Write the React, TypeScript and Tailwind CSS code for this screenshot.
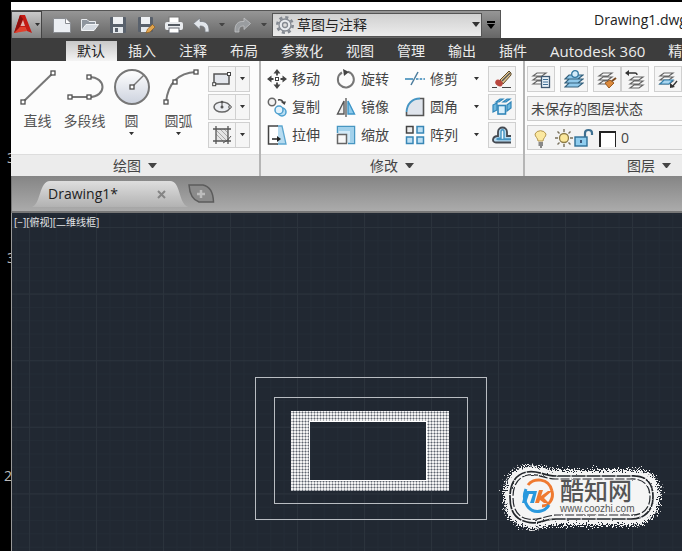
import type { ReactNode } from "react";

const uiFont = "font-['Open_Sans','Noto_Sans_CJK_SC',sans-serif]";

function Caret({ className = "" }: { className?: string }) {
  return (
    <svg viewBox="0 0 8 5" className={`shrink-0 ${className}`} aria-hidden="true">
      <path d="M0 0H8L4 5Z" fill="currentColor" />
    </svg>
  );
}

function Icon({ size = 20, children }: { size?: number; children: ReactNode }) {
  return (
    <svg width={size} height={size} viewBox={`0 0 ${size} ${size}`} fill="none" className="shrink-0" aria-hidden="true">
      {children}
    </svg>
  );
}

/* ---------- quick access toolbar ---------- */

const quickIcons: { label: string; icon: ReactNode }[] = [
  {
    label: "新建",
    icon: (
      <Icon>
        <path d="M1.500 3.500H14L18.500 8V17.500H1.500Z" fill="#eceff3" stroke="#8a8d92" />
        <path d="M13.500 3.500V8.500H18.500" fill="#fff" stroke="#8a8d92" />
      </Icon>
    ),
  },
  {
    label: "打开",
    icon: (
      <Icon>
        <path d="M1.500 15V4.500H7L9 6.500H15.500V9" fill="#8e959e" stroke="#e8ebef" />
        <path d="M1.500 15.500L6 9.500H18.500L14 15.500Z" fill="#d5dae1" stroke="#f1f3f5" />
      </Icon>
    ),
  },
  {
    label: "保存",
    icon: (
      <Icon>
        <rect x="2" y="2" width="16" height="16" rx="1" fill="#59616c" />
        <rect x="5" y="2" width="10" height="7" fill="#eef0f3" />
        <rect x="5" y="12" width="10" height="6" fill="#e4e8ec" />
        <rect x="7" y="13" width="3" height="4" fill="#59616c" />
      </Icon>
    ),
  },
  {
    label: "另存为",
    icon: (
      <Icon>
        <rect x="2" y="2" width="15" height="15" rx="1" fill="#59616c" />
        <rect x="5" y="2" width="9" height="7" fill="#eef0f3" />
        <rect x="5" y="12" width="9" height="5" fill="#e4e8ec" />
        <path d="M10 18L11.500 14L16.500 9.500L19 12L14 17Z" fill="#e2a44c" stroke="#8b5c1f" strokeWidth=".7" />
      </Icon>
    ),
  },
  {
    label: "打印",
    icon: (
      <Icon>
        <rect x="5" y="2" width="10" height="6" fill="#fff" stroke="#777" />
        <rect x="1" y="7" width="18" height="8" rx="2" fill="#e9ebee" />
        <rect x="4" y="9" width="12" height="2" fill="#555b63" />
        <rect x="5" y="13" width="10" height="5" fill="#fff" stroke="#666b73" />
      </Icon>
    ),
  },
  {
    label: "放弃",
    icon: (
      <Icon>
        <path d="M1.500 8.500L8 3V6.500C14 6 17.500 9 17 17H13C13.500 12.500 12 11 8 11V14.500Z" fill="#e1e5ea" stroke="#787d84" strokeWidth=".8" />
      </Icon>
    ),
  },
];

function QuickBar() {
  return (
    <header className="mt-[2px] flex h-9 bg-white">
      <div className="mt-2 flex h-7 shrink-0 items-center border-t border-r border-[#555] bg-linear-to-b from-[#969696] to-[#666]">
        <button
          aria-label="应用程序菜单"
          className="flex h-7 w-[31px] items-center justify-center gap-[2px] border border-[#444] bg-linear-to-b from-[#c9c9c9] to-[#858585] text-[#333]"
        >
          <svg width="20" height="22" viewBox="0 0 20 22" aria-hidden="true">
            <path d="M7 1H12L19 19L14 17L12 13H7L5 18L1 19Z" fill="#c51b14" />
            <path d="M7 1L1 19L5 17L10 5Z" fill="#8f100d" />
            <path d="M10 6L7.500 12H12Z" fill="#e0b5af" />
            <path d="M1 19L7 13H12L14 17Z" fill="#e0402d" />
          </svg>
          <Caret className="w-[5px]" />
        </button>
        <div className="flex items-center pl-[6px]">
          {quickIcons.map((q) => (
            <button key={q.label} aria-label={q.label} className="flex w-7 justify-center">
              {q.icon}
            </button>
          ))}
          <button aria-label="放弃列表" className="flex w-3 justify-center text-[#444]">
            <Caret className="w-[6px]" />
          </button>
          <button aria-label="重做" className="flex w-7 justify-center">
            <Icon>
              <path d="M18.500 8.500L12 3V6.500C6 6 2.500 9 3 17H7C6.500 12.500 8 11 12 11V14.500Z" fill="#999c9f" stroke="#c1c3c5" strokeWidth=".8" />
            </Icon>
          </button>
          <button aria-label="重做列表" className="flex w-4 justify-center text-[#444]">
            <Caret className="w-[6px]" />
          </button>
        </div>
        <div className="grid h-6 w-[210px] items-center border border-[#555] bg-linear-to-b from-[#d0d0d0] to-[#ececec]">
          <select
            aria-label="工作空间"
            className="col-start-1 row-start-1 h-full w-full appearance-none bg-transparent pl-6 text-sm text-[#222] outline-none"
          >
            <option>草图与注释</option>
          </select>
          <div className="pointer-events-none col-start-1 row-start-1 flex items-center justify-between pr-[1px] pl-[2px] text-[#333]">
            <Icon>
              <circle cx="10" cy="10" r="7.700" stroke="#858a92" strokeWidth="2.600" strokeDasharray="3.100 2.950" />
              <circle cx="10" cy="10" r="6" fill="#e8ebef" stroke="#858a92" strokeWidth="1.300" />
              <circle cx="10" cy="10" r="2.500" fill="#ddd" stroke="#858a92" strokeWidth="1.300" />
            </Icon>
            <Caret className="w-2" />
          </div>
        </div>
        <button aria-label="自定义快速访问工具栏" className="flex w-[18px] flex-col items-center gap-[1px] text-black">
          <span className="h-[2px] w-2 bg-black" />
          <Caret className="w-2" />
        </button>
      </div>
      <h1 className="ml-[93px] flex items-center text-sm font-normal whitespace-nowrap text-[#222]">Drawing1.dwg</h1>
    </header>
  );
}

/* ---------- ribbon ---------- */

const ribbonTabs = ["默认", "插入", "注释", "布局", "参数化", "视图", "管理", "输出", "插件", "Autodesk 360", "精选应用"];

function RibbonTabs() {
  return (
    <nav className="flex h-[23px] items-end bg-[#3d3d3d] pl-[55px]">
      {ribbonTabs.map((tab, i) => (
        <button
          key={tab}
          className={`h-5 shrink-0 pr-3 pl-[11px] leading-5 whitespace-nowrap ${
            i === 0 ? "bg-linear-to-b from-[#c8c8c8] to-[#f4f4f4] text-[#222]" : "text-[#ececec]"
          } ${/^[A-Z]/.test(tab) ? "text-[15px]" : "text-sm"}`}
        >
          {tab}
        </button>
      ))}
    </nav>
  );
}

function Panel({ title, className, bodyClass, children }: { title: string; className: string; bodyClass: string; children: ReactNode }) {
  return (
    <section className={`flex shrink-0 flex-col border-r-2 border-[#b5b5b5] bg-[#fcfcfc] ${className}`}>
      <div className={`flex h-[93px] pt-[5px] ${bodyClass}`}>{children}</div>
      <button className="flex h-[22px] items-center justify-center gap-[7px] border-t border-[#ddd] bg-[#ececec] text-sm leading-5 text-[#444]">
        {title}
        <Caret className="w-[9px]" />
      </button>
    </section>
  );
}

function Node({ x, y }: { x: number; y: number }) {
  return <rect x={x - 2} y={y - 2} width="4" height="4" fill="#fff" stroke="#505050" strokeWidth="1.300" />;
}

const drawTools: { label: string; menu: boolean; icon: ReactNode }[] = [
  {
    label: "直线",
    menu: false,
    icon: (
      <Icon size={40}>
        <path d="M5 35L35 6" stroke="#777" strokeWidth="2" />
        <Node x={5} y={35} />
        <Node x={35} y={6} />
      </Icon>
    ),
  },
  {
    label: "多段线",
    menu: false,
    icon: (
      <Icon size={40}>
        <path d="M5 30H24C42 30 42 10 24 10" stroke="#777" strokeWidth="2" />
        <Node x={5} y={30} />
        <Node x={24} y={30} />
        <Node x={24} y={10} />
      </Icon>
    ),
  },
  {
    label: "圆",
    menu: true,
    icon: (
      <Icon size={40}>
        <defs>
          <linearGradient id="disc" x1="0" y1="0" x2="0" y2="1">
            <stop offset="0" stopColor="#fff" />
            <stop offset="1" stopColor="#ccd2de" />
          </linearGradient>
        </defs>
        <circle cx="20" cy="20" r="17" fill="url(#disc)" stroke="#777" strokeWidth="2" />
        <path d="M20 20L32 8" stroke="#777" strokeWidth="1.500" />
        <Node x={20} y={20} />
      </Icon>
    ),
  },
  {
    label: "圆弧",
    menu: true,
    icon: (
      <Icon size={40}>
        <path d="M7 35C9 17 19 6 37 5" stroke="#777" strokeWidth="2" />
        <Node x={7} y={35} />
        <Node x={16} y={15} />
        <Node x={37} y={5} />
      </Icon>
    ),
  },
];

const shapeTools: { label: string; icon: ReactNode }[] = [
  {
    label: "矩形",
    icon: (
      <Icon>
        <rect x="2" y="5" width="15" height="10" fill="#e3e6ec" stroke="#555" strokeWidth="1.500" />
        <rect x=".7" y="13.700" width="3" height="3" fill="#fff" stroke="#444" />
        <rect x="15.500" y="3.500" width="3" height="3" fill="#fff" stroke="#444" />
      </Icon>
    ),
  },
  {
    label: "椭圆",
    icon: (
      <Icon>
        <ellipse cx="10" cy="10" rx="8" ry="5" fill="#eceef2" stroke="#666" strokeWidth="1.500" />
        <path d="M10 5V10" stroke="#555" />
        <circle cx="10" cy="10" r="1.500" fill="#555" />
        <circle cx="10" cy="5" r="1.300" fill="#555" />
        <circle cx="18" cy="10" r="1.300" fill="#fff" stroke="#555" />
      </Icon>
    ),
  },
  {
    label: "图案填充",
    icon: (
      <Icon>
        <rect x="4" y="4" width="12" height="12" fill="#e4e4e4" />
        <path d="M4 9L11 16M4 5L15 16M8 4L16 12M12 4L16 8" stroke="#999" strokeWidth=".8" />
        <path d="M1 4H19M1 16H19M4 1V19M16 1V19" stroke="#555" strokeWidth="1.300" />
        <path d="M11 18Q16 16 19 11" stroke="#555" />
      </Icon>
    ),
  },
];

function DrawPanel() {
  return (
    <Panel title="绘图" className="w-[250px]" bodyClass="pl-[3px]">
      {drawTools.map((t) => (
        <button key={t.label} className="flex w-[47px] flex-col items-center pt-[1px] text-sm leading-5 whitespace-nowrap text-[#555]">
          {t.icon}
          <span className="mt-1">{t.label}</span>
          {t.menu && <Caret className="mt-[1px] w-[5px] text-[#333]" />}
        </button>
      ))}
      <div className="ml-[6px] flex flex-col gap-[2px]">
        {shapeTools.map((t) => (
          <div key={t.label} className="flex h-[26px] w-[42px] border border-[#d0d0d0] bg-[#f5f5f5]">
            <button aria-label={t.label} className="flex w-[27px] items-center justify-center border-r border-[#d0d0d0]">
              {t.icon}
            </button>
            <button aria-label={`${t.label}选项`} className="flex flex-1 items-center justify-center text-[#333]">
              <Caret className="w-[5px]" />
            </button>
          </div>
        ))}
      </div>
    </Panel>
  );
}

type Tool = { label: string; icon: ReactNode };

const modifyColumns: Tool[][] = [
  [
    {
      label: "移动",
      icon: (
        <Icon>
          <path d="M10 2V6.500M10 13.500V18M2 10H6.500M13.500 10H18" stroke="#444" strokeWidth="1.800" />
          <path d="M10 0L13.500 4.500H6.500ZM10 20L13.500 15.500H6.500ZM0 10L4.500 6.500V13.500ZM20 10L15.500 6.500V13.500Z" fill="#444" />
          <rect x="8.500" y="8.500" width="3" height="3" fill="#fff" stroke="#444" />
        </Icon>
      ),
    },
    {
      label: "复制",
      icon: (
        <Icon>
          <circle cx="5" cy="5" r="3.700" fill="#f3f3f3" stroke="#666" strokeWidth="1.500" />
          <circle cx="15" cy="15" r="4" fill="#b9def3" stroke="#4c9fce" strokeWidth="1.500" />
          <circle cx="12" cy="13" r="4" fill="#e3f3fc" stroke="#4c9fce" strokeWidth="1.500" />
          <path d="M11 3Q15 2 16 5" stroke="#444" strokeWidth="1.300" />
          <path d="M13.500 4.500H19L17.500 8Z" fill="#444" />
        </Icon>
      ),
    },
    {
      label: "拉伸",
      icon: (
        <Icon>
          <path d="M10 1H15L19 19H10" fill="#b6dbf0" stroke="#5ca6cf" strokeWidth="1.300" />
          <path d="M11 1H1.500V19H11" fill="#fff" stroke="#444" strokeWidth="1.500" />
          <path d="M5 14H11" stroke="#222" strokeWidth="1.500" />
          <path d="M10 11L14 14L10 17Z" fill="#222" />
        </Icon>
      ),
    },
  ],
  [
    {
      label: "旋转",
      icon: (
        <Icon>
          <path d="M6 3.500A8 8 0 1 0 12 2.800" stroke="#777" strokeWidth="2" />
          <path d="M7 0L13 3L8 7Z" fill="#444" />
        </Icon>
      ),
    },
    {
      label: "镜像",
      icon: (
        <Icon>
          <path d="M8 4V17H1.500Z" fill="#f0f0f0" stroke="#555" strokeWidth="1.400" />
          <path d="M12 4V17H18.500Z" fill="#8ecaeb" stroke="#3d95c7" strokeWidth="1.400" />
          <path d="M10 1V20" stroke="#444" strokeWidth="1.200" />
        </Icon>
      ),
    },
    {
      label: "缩放",
      icon: (
        <Icon>
          <path d="M1.500 8V1.500H18.500V18.500H12" fill="#d3eaf7" stroke="#4796c1" strokeWidth="1.500" />
          <path d="M2 2H18V6H2ZM14 5H18V18H14Z" fill="#a2d1eb" />
          <rect x="1.500" y="9.500" width="9" height="9" fill="#f7f7f7" stroke="#666" strokeWidth="1.500" />
        </Icon>
      ),
    },
  ],
  [
    {
      label: "修剪",
      icon: (
        <Icon>
          <path d="M0 10H8" stroke="#3384b5" strokeWidth="1.500" />
          <path d="M11 10H20" stroke="#3384b5" strokeWidth="1.300" strokeDasharray="2.500 1.200" />
          <path d="M6 16L13 3" stroke="#4a7b9c" strokeWidth="1.500" />
        </Icon>
      ),
    },
    {
      label: "圆角",
      icon: (
        <Icon>
          <path d="M1.500 18.500V15C2 7 7 1.500 15 1.500H18.500V18.500Z" fill="#dfe4ec" />
          <path d="M15 1.500H18.500V18.500H1.500V15" stroke="#555" strokeWidth="1.600" />
          <path d="M1.500 15C2 7 7 1.500 15 1.500" stroke="#4595c3" strokeWidth="1.800" />
        </Icon>
      ),
    },
    {
      label: "阵列",
      icon: (
        <Icon>
          <rect x="1.500" y="1.500" width="6.500" height="6.500" fill="#eee" stroke="#444" strokeWidth="1.500" />
          <path d="M12 1.500H18.500V8H12ZM1.500 12H8V18.500H1.500ZM12 12H18.500V18.500H12Z" fill="#bfe0f4" stroke="#3987b6" strokeWidth="1.500" />
        </Icon>
      ),
    },
  ],
];

const modifyExtras: Tool[] = [
  {
    label: "删除",
    icon: (
      <Icon>
        <path d="M8 11L17 2L19 4V6L11 15Z" fill="#e3c68f" stroke="#5d4a2a" />
        <path d="M10 12L18 4" stroke="#555" strokeWidth="1.500" />
        <ellipse cx="7" cy="14" rx="4" ry="3" fill="#b9473e" transform="rotate(35 7 14)" />
        <path d="M0 18.500H5M10 18.500H19" stroke="#444" />
      </Icon>
    ),
  },
  {
    label: "分解",
    icon: (
      <Icon>
        <path d="M1 8L5 6V13L1 15ZM15 8L19 5V11L15 14ZM4 5L8 2H11L7 5ZM11 5L15 2H18L14 5Z" fill="#6fb8de" stroke="#3186b9" strokeWidth="1.200" />
        <rect x="6" y="8.500" width="7.500" height="8.500" fill="#d9effb" stroke="#3186b9" strokeWidth="1.600" />
      </Icon>
    ),
  },
  {
    label: "偏移",
    icon: (
      <Icon>
        <path d="M19 17.500H4C-.5 17.500 0 11 6 11V7C6 1 15 1 15 7V11H19" fill="#b8dbf1" stroke="#454a52" strokeWidth="1.800" />
        <path d="M19 14.500H6C4 14.500 5 13 9 13V7C9 4 12 4 12 7V14H19" fill="#eef6fb" stroke="#4595c3" strokeWidth="1.400" />
      </Icon>
    ),
  },
];

function BoxedTool({ tool, className = "" }: { tool: Tool; className?: string }) {
  return (
    <button
      aria-label={tool.label}
      className={`flex h-[26px] w-7 shrink-0 items-center justify-center border border-[#d0d0d0] bg-[#f5f5f5] ${className}`}
    >
      {tool.icon}
    </button>
  );
}

function ModifyPanel() {
  return (
    <Panel title="修改" className="w-[264px]" bodyClass="pl-[6px]">
      {modifyColumns.map((column, c) => (
        <div key={c} className="flex w-[69px] shrink-0 flex-col gap-[2px]">
          {column.map((t) => (
            <div key={t.label} className="flex h-[26px] items-center">
              <button className="flex items-center gap-[5px] text-sm leading-5 whitespace-nowrap text-[#444]">
                {t.icon}
                {t.label}
              </button>
            </div>
          ))}
        </div>
      ))}
      <div className="flex w-[14px] shrink-0 flex-col gap-[2px] text-[#333]">
        {modifyColumns[2].map((t) => (
          <button key={t.label} aria-label={`${t.label}选项`} className="flex h-[26px] w-[9px] items-center justify-start">
            <Caret className="w-[5px]" />
          </button>
        ))}
      </div>
      <div className="flex flex-col gap-[2px]">
        {modifyExtras.map((t) => (
          <BoxedTool key={t.label} tool={t} />
        ))}
      </div>
    </Panel>
  );
}

function Sheets({ blue = false }: { blue?: boolean }) {
  return (
    <path
      d="M2 15L6 12H15L11 15ZM2 11L6 8H15L11 11ZM2 7L6 4H15L11 7Z"
      fill={blue ? "#a9d6f0" : "#fafafa"}
      stroke={blue ? "#34779f" : "#666"}
      strokeWidth="1.200"
    />
  );
}

const layerTools: Tool[] = [
  {
    label: "图层特性",
    icon: (
      <Icon>
        <Sheets />
        <rect x="10.500" y="7.500" width="8" height="11" fill="#e9f2fa" stroke="#3f5870" strokeWidth="1.300" />
        <path d="M12 10.500H17M12 13H17M12 15.500H17" stroke="#3f6f96" />
      </Icon>
    ),
  },
  {
    label: "置为当前",
    icon: (
      <Icon>
        <path d="M1 18L5 14H19L14 18ZM1 14L5 10H19L14 14ZM1 10L5 6H19L14 10Z" fill="#8fc8ea" stroke="#34607c" strokeWidth="1.200" />
        <circle cx="11" cy="5" r="3.300" fill="#d4ecfa" stroke="#34779f" strokeWidth="1.300" />
      </Icon>
    ),
  },
  {
    label: "匹配图层",
    icon: (
      <Icon>
        <Sheets />
        <path d="M8 14L13 11L17 14L12 19Z" fill="#dc8a3c" stroke="#9b5a20" />
        <path d="M15 12L19 9" stroke="#7b4a20" strokeWidth="2" />
      </Icon>
    ),
  },
  {
    label: "上一个",
    icon: (
      <Icon>
        <g transform="translate(3 4)">
          <Sheets />
        </g>
        <path d="M3 4H10Q12 4 12 6" stroke="#333" strokeWidth="1.300" />
        <path d="M0 4L4 1V7Z" fill="#333" />
      </Icon>
    ),
  },
  {
    label: "更改为当前图层",
    icon: (
      <Icon>
        <Sheets />
        <path d="M2 15L6 11H15L11 15Z" fill="#a9d6f0" stroke="#3480ad" strokeWidth="1.200" />
        <path d="M19 12L14 18" stroke="#333" strokeWidth="1.300" />
        <path d="M12 19V14L17 18Z" fill="#333" />
      </Icon>
    ),
  },
];

function LayerPanel() {
  return (
    <Panel title="图层" className="w-[250px]" bodyClass="pl-[2px]">
      <div className="flex min-w-0 flex-1 flex-col gap-1">
        <div className="flex">
          {layerTools.map((t, i) => (
            <BoxedTool key={t.label} tool={t} className={i === 2 ? "" : "mr-[5px]"} />
          ))}
        </div>
        <select
          aria-label="图层状态"
          className="h-[25px] w-full shrink-0 appearance-none border border-[#ccc] bg-[#f3f3f3] pl-[3px] text-sm text-[#444] outline-none"
        >
          <option>未保存的图层状态</option>
        </select>
        <button aria-label="当前图层 0" className="flex h-[25px] shrink-0 items-center border border-[#ccc] bg-[#f3f3f3] pl-[3px] text-sm text-[#444]">
          <Icon>
            <path d="M7 13C7 10 4 9 4 6A6 5.500 0 0 1 15 6C15 9 12 10 12 13Z" fill="#fbe8a0" stroke="#b4964e" />
            <path d="M7.500 15H12M7.500 17H12M9 19H11" stroke="#666" strokeWidth="1.300" />
          </Icon>
          <span className="ml-[3px]">
            <Icon>
              <circle cx="10" cy="10" r="4.500" fill="#fbe79a" stroke="#8e7c46" strokeWidth="1.300" />
              <path d="M10 1V4M10 16V19M1 10H4M16 10H19M3.500 3.500L5.500 5.500M14.500 14.500L16.500 16.500M3.500 16.500L5.500 14.500M14.500 5.500L16.500 3.500" stroke="#77705c" strokeWidth="1.400" />
            </Icon>
          </span>
          <Icon>
            <rect x="1" y="9" width="12" height="9" fill="#8fcdef" stroke="#2d6e96" strokeWidth="1.400" />
            <path d="M11 9V5C11 1 18 1 18 5V7" stroke="#3d6f90" strokeWidth="2.200" />
            <path d="M7 12V15" stroke="#235" strokeWidth="1.500" />
          </Icon>
          <span className="mt-[3px] ml-[5px] h-4 w-[17px] border-t-2 border-r border-l-2 border-[#222] bg-white" />
          <span className="ml-[5px]">0</span>
        </button>
      </div>
    </Panel>
  );
}

/* ---------- document tabs ---------- */

function DocumentTabs() {
  return (
    <div className="flex h-[37px] items-start border-b-2 border-l border-[#777] bg-linear-to-b from-[#858585] to-[#ababab] pt-[5px] pl-5">
      <div className="grid h-[26px] w-[156px] shrink-0">
        <svg viewBox="0 0 156 26" className="col-start-1 row-start-1 h-[26px] w-[156px]" aria-hidden="true">
          <defs>
            <linearGradient id="doc-tab" x1="0" y1="0" x2="0" y2="1">
              <stop offset="0" stopColor="#dedede" />
              <stop offset="1" stopColor="#b2b2b2" />
            </linearGradient>
          </defs>
          <path d="M0 26C9 23 7 0 18 0H138C149 0 146 22 156 26Z" fill="url(#doc-tab)" />
        </svg>
        <div className="col-start-1 row-start-1 flex items-center justify-between pr-[22px] pl-4">
          <button className="text-sm leading-5 text-[#222]">Drawing1*</button>
          <button aria-label="关闭 Drawing1">
            <svg width="9" height="9" viewBox="0 0 9 9" aria-hidden="true">
              <path d="M1 1L8 8M8 1L1 8" stroke="#858585" strokeWidth="2" />
            </svg>
          </button>
        </div>
      </div>
      <button aria-label="新建图形" className="mt-[3px]">
        <svg width="27" height="20" viewBox="0 0 27 20" aria-hidden="true">
          <path d="M1 1H15Q25 3 25.500 18H11Q2 15 1 1Z" fill="#8b8b8b" stroke="#5c5c5c" strokeWidth="1.500" />
          <path d="M13 6V14M9 10H17" stroke="#bcbcbc" strokeWidth="2.500" />
        </svg>
      </button>
    </div>
  );
}

/* ---------- model space ---------- */

function Watermark() {
  return (
    <svg width="182" height="84" viewBox="0 0 182 84" className="absolute top-[241px] left-[479px]" role="img" aria-label="酷知网 www.coozhi.com">
      <defs>
        <filter id="spray" x="-10%" y="-20%" width="120%" height="140%">
          <feTurbulence type="fractalNoise" baseFrequency=".8" numOctaves="2" seed="4" />
          <feDisplacementMap in="SourceGraphic" scale="16" xChannelSelector="R" yChannelSelector="G" />
          <feGaussianBlur stdDeviation=".6" />
        </filter>
        <filter id="rough">
          <feTurbulence type="fractalNoise" baseFrequency=".25" numOctaves="2" seed="9" />
          <feDisplacementMap in="SourceGraphic" scale="2" xChannelSelector="R" yChannelSelector="G" />
        </filter>
      </defs>
      <path
        d="M36 12C48 10 53 16 65 16H140C164 14 169 28 169 42C169 60 158 71 140 71H65C53 71 48 77 36 74C21 71 13 61 13 42C13 24 21 14 36 12Z"
        fill="#f2f2f2"
        filter="url(#spray)"
      />
      <path
        d="M36 15C48 13 53 19 65 19H140C160 18 165 29 165 43C165 58 156 67 140 67H65C53 68 48 73 36 70C22 67 17 58 17 43C17 27 24 17 36 15Z"
        fill="#f5f5f5"
      />
      <g filter="url(#rough)" stroke="#22262b" fill="none">
        <path d="M36 18C47 16 53 22 65 22H140C157 21 162 31 162 43C162 56 154 65 140 65H65C53 65 47 71 36 68C23 65 19 56 19 43C19 29 25 20 36 18Z" strokeWidth="1.700" strokeDasharray="14 1" />
        <path d="M37 21C47 19 53 25 65 25H139C154 24 159 33 159 43C159 54 152 62 139 61H65C53 62 47 67 37 65C26 63 22 55 22 43C22 31 27 23 37 21Z" strokeWidth="1.200" strokeDasharray="9 2" />
      </g>
      <path d="M37 31C42 24 58 23 61 37C63 45 58 52 51 52" fill="none" stroke="#ef7a31" strokeWidth="3" />
      <path d="M35 35C30 47 38 60 50 57Q55 56 58 51" fill="none" stroke="#2998dd" strokeWidth="3" />
      <path d="M34 37H46L43 49H39L42 40H38L35 49H31Z" fill="#2998dd" />
      <path d="M48 36H52L50 42L57 37H61L53 44L58 49H53L49 46L48 49H44Z" fill="#ef7a31" />
      <text x="69" y="46" fill="#555" fontSize="24" fontWeight="500" fontFamily="'Noto Sans CJK SC', sans-serif">
        酷知网
      </text>
      <text x="69" y="58" fill="#555" fontSize="10" fontFamily="'Liberation Sans', sans-serif">
        www.coozhi.com
      </text>
    </svg>
  );
}

function ModelSpace() {
  return (
    <main className="relative flex-1 overflow-hidden border-l border-[#999] bg-[#212832]">
      <svg className="absolute inset-0 h-full w-full" aria-hidden="true">
        <defs>
          <pattern id="minor" x="17" y="14" width="13.400" height="13.320" patternUnits="userSpaceOnUse">
            <path d="M.5 0V13.320M0 .5H13.400" stroke="#242c36" />
          </pattern>
          <pattern id="major" x="17" y="14" width="67" height="66.600" patternUnits="userSpaceOnUse">
            <path d="M.5 0V66.600M0 .5H67" stroke="#2b333c" />
          </pattern>
          <pattern id="hatch" x="280" y="198" width="3" height="3" patternUnits="userSpaceOnUse">
            <rect width="3" height="3" fill="#f2f2f2" />
            <rect x="1" y="1" width="1" height="1" fill="#303842" />
            <path d="M1.500 0V3M0 1.500H3" stroke="#6b727b" strokeOpacity=".5" />
          </pattern>
        </defs>
        <rect width="100%" height="100%" fill="url(#minor)" />
        <rect width="100%" height="100%" fill="url(#major)" />
        <g fill="none" stroke="#b9bdc2">
          <rect x="243.500" y="164.500" width="231" height="142" />
          <rect x="262.500" y="184.500" width="193" height="106" />
        </g>
        <path d="M279 198H437V278H279ZM297 209V267H415V209Z" fill="url(#hatch)" fillRule="evenodd" />
        <rect x="297.500" y="208.500" width="117" height="59" fill="none" stroke="#fff" />
      </svg>
      <div className="relative pt-[3px] pl-[2px] text-[10px] leading-3 text-[#e4e6e8]">[−][俯视][二维线框]</div>
      <Watermark />
    </main>
  );
}

export default function App() {
  return (
    <div className={`flex min-h-screen overflow-hidden bg-black ${uiFont}`}>
      <aside className="flex w-[11px] shrink-0 flex-col items-end overflow-hidden pt-[148px] text-sm leading-5 text-[#bbb]">
        <span className="w-1">3</span>
        <span className="mt-20 w-1">3</span>
        <span className="mt-[198px] w-[7px]">2</span>
      </aside>
      <div className="flex min-w-0 flex-1 flex-col overflow-hidden">
        <QuickBar />
        <RibbonTabs />
        <div className="flex overflow-hidden">
          <DrawPanel />
          <ModifyPanel />
          <LayerPanel />
        </div>
        <DocumentTabs />
        <ModelSpace />
      </div>
    </div>
  );
}
